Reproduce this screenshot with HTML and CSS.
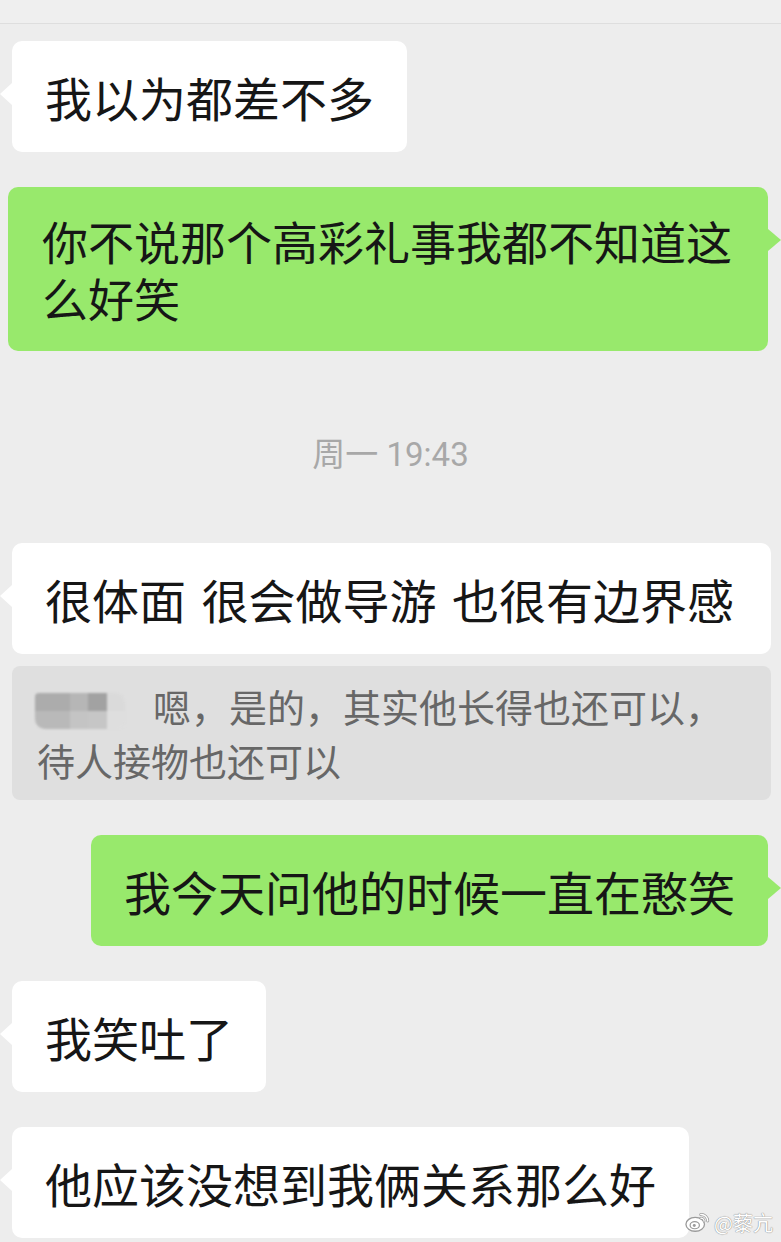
FILE: index.html
```html
<!DOCTYPE html>
<html lang="zh-CN">
<head>
<meta charset="utf-8">
<title>聊天</title>
<link rel="stylesheet" href="styles.css">
</head>
<body>
<div class="screen">
  <div class="topbar"></div>
  <div class="chat">
    <div class="row left first">
      <div class="bubble white">我以为都差不多</div>
    </div>
    <div class="row right">
      <div class="bubble green tight">你不说那个高彩礼事我都不知道这么好笑</div>
    </div>
    <div class="time">周一 19:43</div>
    <div class="row left">
      <div class="bubble white wide">很体面 很会做导游 也很有边界感</div>
    </div>
    <div class="row left quote-row">
      <div class="quote"><span class="mosaic"><i class="m1"></i><i class="m2"></i><i class="m3"></i><i class="m4"></i><i class="m5"></i><i class="m6"></i><i class="m7"></i><i class="m8"></i></span>嗯，是的，其实他长得也还可以，待人接物也还可以</div>
    </div>
    <div class="row right">
      <div class="bubble green">我今天问他的时候一直在憨笑</div>
    </div>
    <div class="row left">
      <div class="bubble white">我笑吐了</div>
    </div>
    <div class="row left">
      <div class="bubble white">他应该没想到我俩关系那么好</div>
    </div>
  </div>
  <div class="watermark">
    <svg class="wb" width="26" height="23" viewBox="0 0 28 24">
      <ellipse cx="11" cy="15" rx="10" ry="7.5" fill="#fff" stroke="#9a9a9a" stroke-width="1.4"/>
      <ellipse cx="10.5" cy="16" rx="5" ry="3.8" fill="#fff" stroke="#9a9a9a" stroke-width="1.3"/>
      <circle cx="10" cy="16.3" r="1.6" fill="#9a9a9a"/>
      <path d="M17 4.5 A7 7 0 0 1 24.5 11.5" fill="none" stroke="#9a9a9a" stroke-width="3.2" stroke-linecap="round"/>
      <path d="M17 4.5 A7 7 0 0 1 24.5 11.5" fill="none" stroke="#fff" stroke-width="1.6" stroke-linecap="round"/>
      <path d="M17 8.3 A3.4 3.4 0 0 1 20.6 11.6" fill="none" stroke="#9a9a9a" stroke-width="2.8" stroke-linecap="round"/>
      <path d="M17 8.3 A3.4 3.4 0 0 1 20.6 11.6" fill="none" stroke="#fff" stroke-width="1.3" stroke-linecap="round"/>
    </svg>
    <span class="wm-text">@藜亢</span>
  </div>
</div>
</body>
</html>
```

FILE: styles.css
```css
html, body {
  margin: 0;
  padding: 0;
  background: #ededed;
}
.screen {
  position: relative;
  width: 781px;
  height: 1242px;
  overflow: hidden;
  background: #ededed;
  font-family: "Noto Sans CJK SC", "Noto Sans", sans-serif;
}
.topbar {
  height: 23px;
  background: #efefef;
  border-bottom: 1px solid #dedede;
}
.chat {
  display: flex;
  flex-direction: column;
  gap: 35px;
}
.row {
  display: flex;
}
.row.first {
  margin-top: 17px;
}
.row.left {
  justify-content: flex-start;
  padding-left: 12px;
}
.row.right {
  justify-content: flex-end;
  padding-right: 13px;
}
.bubble {
  position: relative;
  box-sizing: border-box;
  max-width: 760px;
  padding: 27px 33px 27px 33px;
  border-radius: 10px;
  font-size: 47px;
  line-height: 57px;
  color: #161616;
  word-spacing: 5px;
}
.bubble.tight {
  font-size: 46px;
  padding: 25px 34px 25px 34px;
}
.bubble.wide {
  padding-right: 37px;
}
.bubble.white {
  background: #ffffff;
}
.bubble.green {
  background: #98e96c;
}
.bubble::before {
  content: "";
  position: absolute;
  top: 42px;
  width: 0;
  height: 0;
  border-top: 11px solid transparent;
  border-bottom: 11px solid transparent;
}
.bubble.white::before {
  left: -12px;
  border-right: 12px solid #ffffff;
}
.bubble.green::before {
  right: -13px;
  border-left: 13px solid #98e96c;
}
.time {
  margin-top: 49px;
  margin-bottom: 33px;
  text-align: center;
  font-family: "Roboto", "Noto Sans CJK SC", sans-serif;
  font-size: 33px;
  line-height: 40px;
  color: #a8a8a8;
}
.quote-row {
  margin-top: -23px;
}
.quote {
  box-sizing: border-box;
  width: 759px;
  padding: 13px 30px 13px 25px;
  border-radius: 8px;
  background: #dfdfdf;
  font-size: 38px;
  line-height: 54px;
  color: #676767;
}
.mosaic {
  display: inline-block;
  position: relative;
  width: 90px;
  height: 36px;
  margin-left: -2px;
  margin-right: 28px;
  vertical-align: -7px;
  filter: blur(1px);
  border-radius: 4px 10px 6px 10px;
  overflow: hidden;
}
.mosaic i {
  position: absolute;
  display: block;
  height: 18px;
}
.m1 { left: 0; top: 0; width: 35px; background: #acacac; }
.m2 { left: 35px; top: 0; width: 18px; background: #b6b6b6; }
.m3 { left: 53px; top: 0; width: 19px; background: #a2a2a2; }
.m4 { left: 72px; top: 0; width: 18px; background: #dadada; }
.m5 { left: 0; top: 18px; width: 35px; background: #b9b9b9; }
.m6 { left: 35px; top: 18px; width: 18px; background: #c4c4c4; }
.m7 { left: 53px; top: 18px; width: 19px; background: #c6c6c6; }
.m8 { left: 72px; top: 18px; width: 18px; background: #dedede; }
.watermark {
  position: absolute;
  right: 8px;
  bottom: 9px;
  display: flex;
  align-items: flex-end;
  gap: 3px;
}
.wb {
  display: block;
}
.wm-text {
  font-size: 20px;
  line-height: 20px;
  color: #ffffff;
  text-shadow: 0 0 1px #8a8a8a, 0 0 1px #8a8a8a;
}
```
